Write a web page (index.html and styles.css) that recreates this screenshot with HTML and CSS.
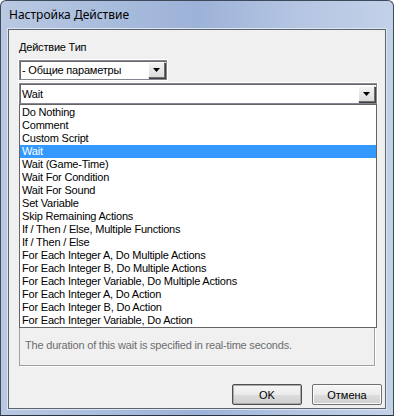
FILE: index.html
```html
<!DOCTYPE html>
<html lang="ru">
<head>
    <meta charset="UTF-8">
    <title>Настройка Действие</title>
    <link rel="stylesheet" href="styles.css">
</head>
<body>
    <div class="window">
        <div class="titlebar">Настройка Действие</div>
        <div class="client">
            <div class="label">Действие Тип</div>

            <!-- Категория -->
            <div class="combo combo-small">
                <span class="combo-text">- Общие параметры</span>
                <span class="combo-btn"><svg width="7" height="4" viewBox="0 0 7 4"><path d="M0 0h7L3.5 4z" fill="#000"/></svg></span>
            </div>

            <!-- Действие -->
            <div class="combo combo-wide">
                <span class="combo-text">Wait</span>
                <span class="combo-btn"><svg width="7" height="4" viewBox="0 0 7 4"><path d="M0 0h7L3.5 4z" fill="#000"/></svg></span>
            </div>

            <ul class="list">
                <li>Do Nothing</li>
                <li>Comment</li>
                <li>Custom Script</li>
                <li class="selected">Wait</li>
                <li>Wait (Game-Time)</li>
                <li>Wait For Condition</li>
                <li>Wait For Sound</li>
                <li>Set Variable</li>
                <li>Skip Remaining Actions</li>
                <li>If / Then / Else, Multiple Functions</li>
                <li>If / Then / Else</li>
                <li>For Each Integer A, Do Multiple Actions</li>
                <li>For Each Integer B, Do Multiple Actions</li>
                <li>For Each Integer Variable, Do Multiple Actions</li>
                <li>For Each Integer A, Do Action</li>
                <li>For Each Integer B, Do Action</li>
                <li>For Each Integer Variable, Do Action</li>
            </ul>

            <div class="desc">The duration of this wait is specified in real-time seconds.</div>

            <div class="buttons">
                <button class="btn btn-default">OK</button>
                <button class="btn">Отмена</button>
            </div>
        </div>
    </div>
</body>
</html>
```

FILE: styles.css
```css
body {
    margin: 0;
    padding: 0;
    background: #fff;
    font-family: 'Liberation Sans', Arial, sans-serif;
    font-size: 11px;
    letter-spacing: -0.2px;
    color: #000;
}
.window {
    width: 394px;
    height: 416px;
    box-sizing: border-box;
    padding: 0 7px 6px 7px;
    border-radius: 6px 6px 0 0;
    border: 1px solid #3c4a5c;
    border-bottom-color: #2a3340;
    background: linear-gradient(to right, #b9c9e2 0%, #a7bbdc 30%, #9db2d8 50%, #b4c5e2 75%, #c3d1e8 100%);
    display: flex;
    flex-direction: column;
    overflow: hidden;
}
.titlebar {
    height: 28px;
    line-height: 28px;
    padding-left: 1px;
    font-family: 'Noto Sans', 'Open Sans', sans-serif;
    font-size: 12px;
    letter-spacing: 0;
    color: #000;
    flex-shrink: 0;
}
.client {
    flex: 1;
    background: #f0f0f0;
    border: 1px solid #5c6470;
    box-shadow: 0 0 0 1px #dde5f2;
    padding: 11px 9px 0 10px;
    display: flex;
    flex-direction: column;
}
.label {
    height: 13px;
    line-height: 13px;
}

/* Выпадающие списки */
.combo {
    display: flex;
    align-items: center;
    background: #fff;
    border: 1px solid #828790;
    box-shadow: inset 1px 1px 0 #696969, 0 0 0 1px #fff;
    box-sizing: border-box;
}
.combo-small {
    width: 148px;
    height: 20px;
    margin-top: 6px;
}
.combo-wide {
    width: 358px;
    height: 21px;
    margin-top: 3px;
}
.combo-text {
    flex: 1;
    padding-left: 2px;
    white-space: nowrap;
}
.combo-btn {
    width: 15px;
    height: 14px;
    margin-right: 1px;
    display: flex;
    align-items: center;
    justify-content: center;
    background: linear-gradient(to bottom, #f2f2f2, #dcdcdc);
    border: 1px solid #707070;
    border-top-color: #fff;
    border-left-color: #fff;
    box-shadow: 1px 1px 0 #404040;
}

/* Список действий */
.list {
    list-style: none;
    margin: 0;
    padding: 1px 0 0;
    width: 358px;
    height: 224px;
    box-sizing: border-box;
    background: #fff;
    border: 1px solid #646464;
    overflow: hidden;
}
.list li {
    height: 13px;
    line-height: 13px;
    padding-left: 2px;
    white-space: nowrap;
}
.list li.selected {
    background: #3399ff;
    color: #fff;
}
.desc {
    width: 356px;
    height: 38px;
    box-sizing: border-box;
    border: 1px solid #a0a0a0;
    border-top: none;
    box-shadow: 1px 1px 0 #fff;
    padding: 11px 0 0 5px;
    color: #6d6d6d;
}
.buttons {
    display: flex;
    justify-content: flex-end;
    gap: 10px;
    margin-top: 18px;
    margin-right: -6px;
}
.btn {
    width: 70px;
    height: 21px;
    padding: 0;
    font-family: 'Liberation Sans', Arial, sans-serif;
    font-size: 11px;
    color: #000;
    border: 1px solid #707070;
    border-radius: 2px;
    background: linear-gradient(to bottom, #f6f6f6 0%, #ebebeb 50%, #dddddd 51%, #cfcfcf 100%);
    box-shadow: inset 0 0 0 1px #fcfcfc;
}
.btn-default {
    border-color: #505050;
    box-shadow: inset 0 0 0 1px #aaa;
}
```
